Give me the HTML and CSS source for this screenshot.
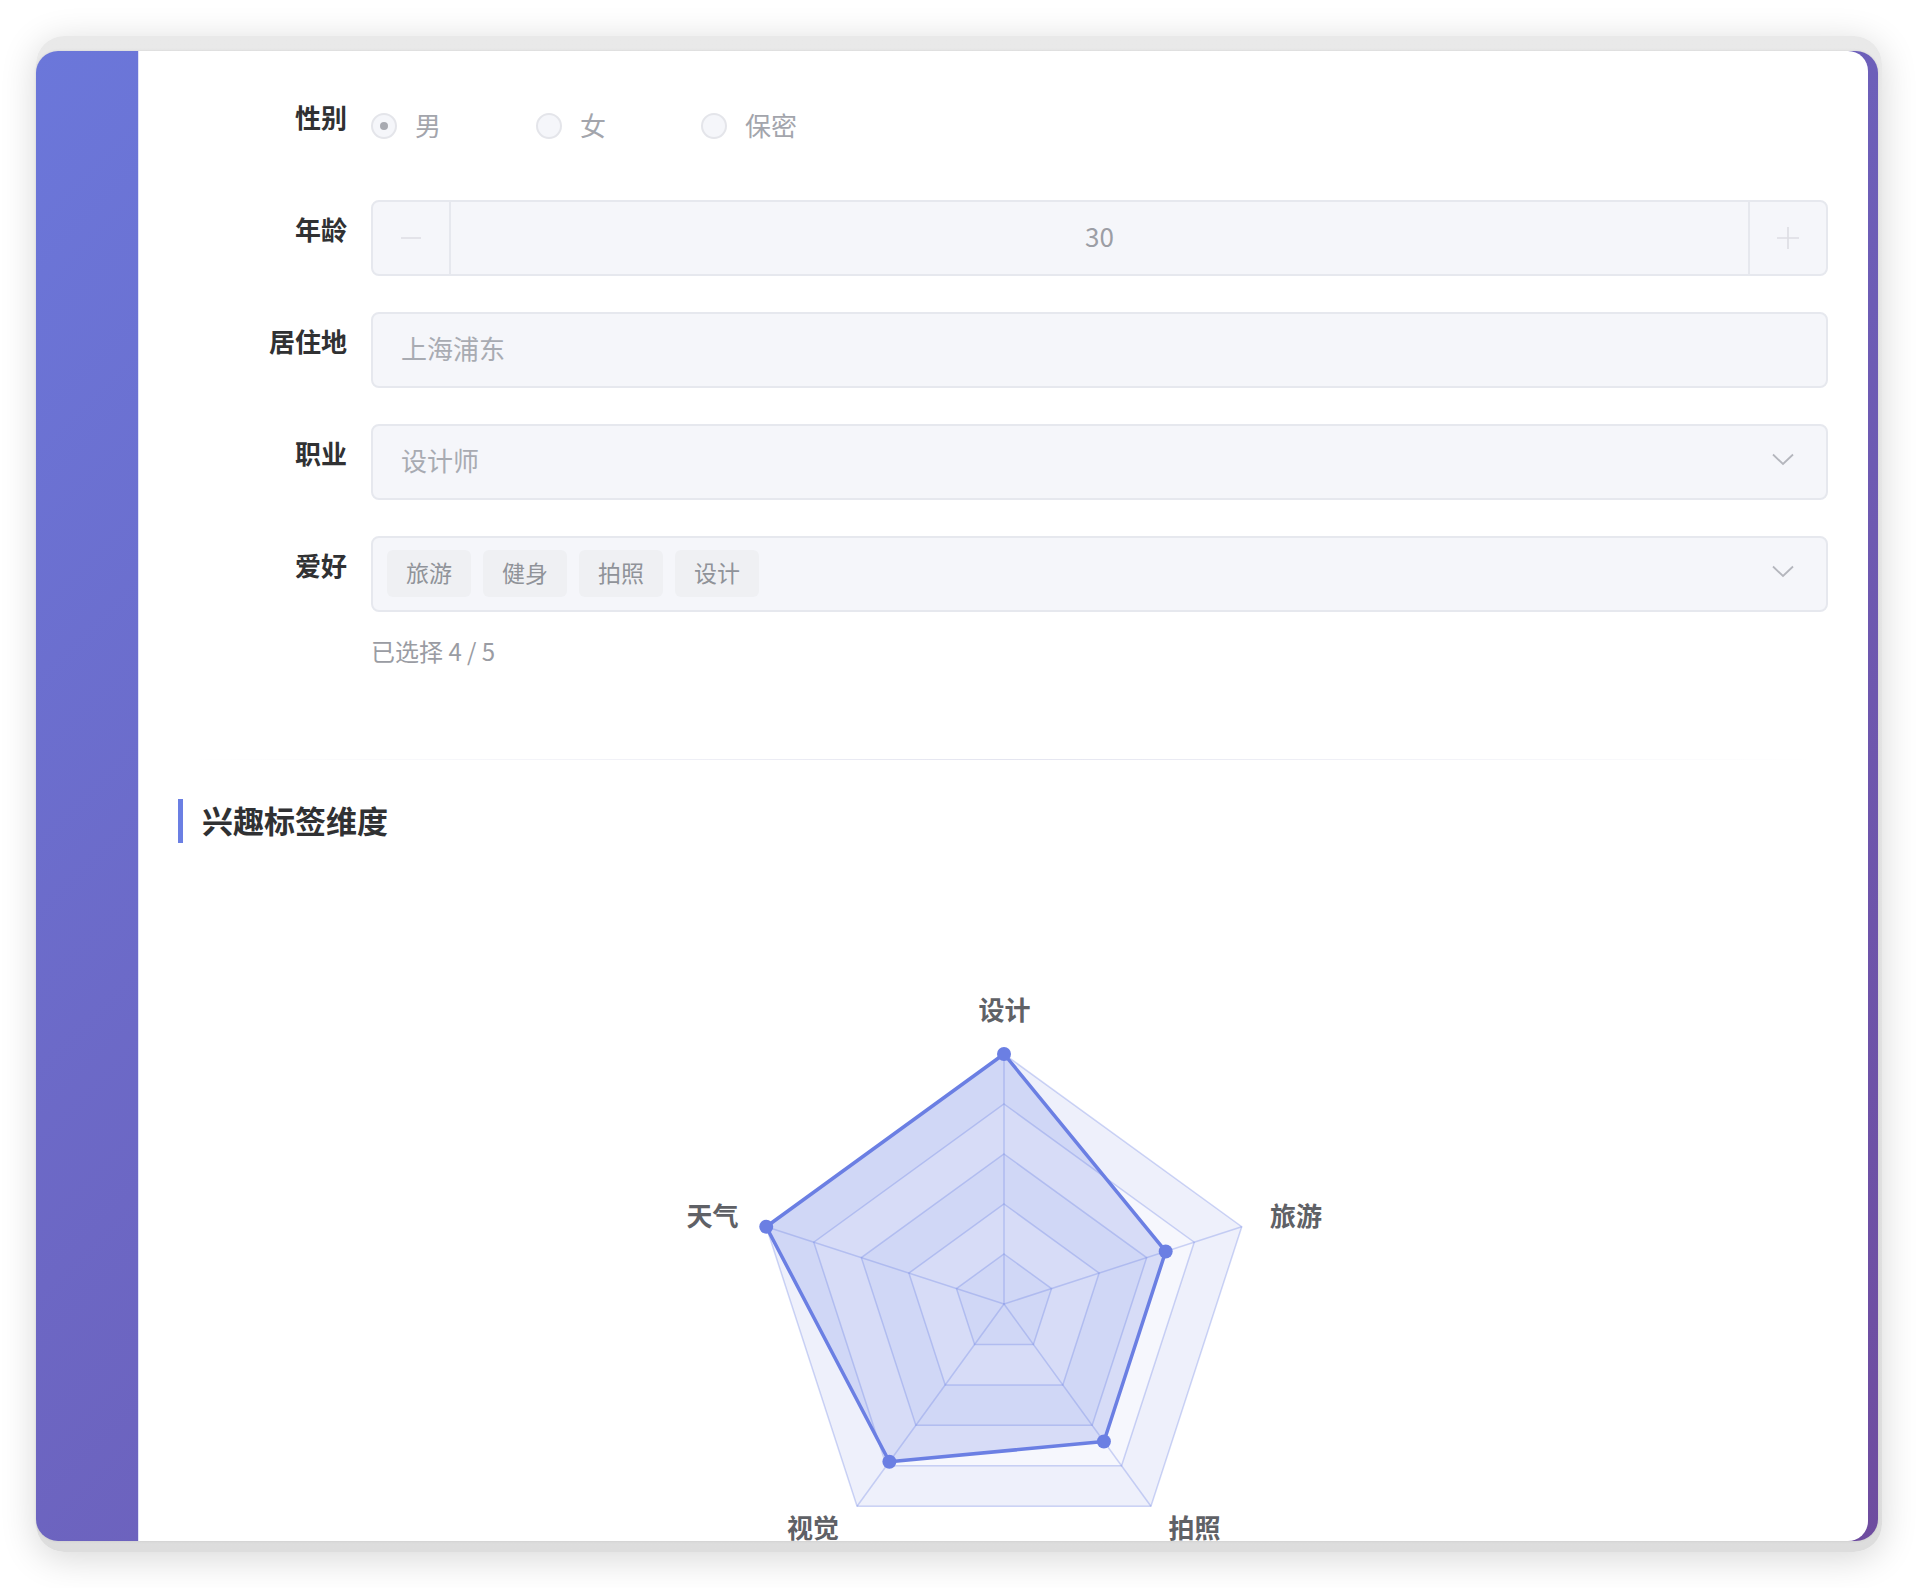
FILE: index.html
```html
<!DOCTYPE html>
<html lang="zh-CN">
<head>
<meta charset="utf-8">
<title>个人资料</title>
<link rel="stylesheet" href="styles.css">
</head>
<body>
<div class="frame">
  <div class="screen">
    <aside class="side"></aside>
    <main class="panel">
      <div class="form">
        <div class="row">
          <label class="lbl">性别</label>
          <div class="radios">
            <span class="radio on"><i class="circle"></i><span>男</span></span>
            <span class="radio"><i class="circle"></i><span>女</span></span>
            <span class="radio"><i class="circle"></i><span>保密</span></span>
          </div>
        </div>
        <div class="row">
          <label class="lbl">年龄</label>
          <div class="field num">
            <span class="step minus"><svg width="22" height="22" viewBox="0 0 22 22"><line x1="1" y1="11" x2="21" y2="11" stroke="#dcdde3" stroke-width="1.6"/></svg></span>
            <span class="val">30</span>
            <span class="step plus"><svg width="22" height="22" viewBox="0 0 22 22"><line x1="0" y1="11" x2="22" y2="11" stroke="#dcdde3" stroke-width="1.6"/><line x1="11" y1="0" x2="11" y2="22" stroke="#dcdde3" stroke-width="1.6"/></svg></span>
          </div>
        </div>
        <div class="row">
          <label class="lbl">居住地</label>
          <div class="field text"><span class="ph">上海浦东</span></div>
        </div>
        <div class="row">
          <label class="lbl">职业</label>
          <div class="field select">
            <span class="ph">设计师</span>
            <svg class="chev" width="22" height="13" viewBox="0 0 22 13"><polyline points="1,1.5 11,11 21,1.5" fill="none" stroke="#b4b6bd" stroke-width="1.8"/></svg>
          </div>
        </div>
        <div class="row last">
          <label class="lbl">爱好</label>
          <div class="field select tags">
            <div class="tag-list">
              <span class="tag">旅游</span>
              <span class="tag">健身</span>
              <span class="tag">拍照</span>
              <span class="tag">设计</span>
            </div>
            <svg class="chev" width="22" height="13" viewBox="0 0 22 13"><polyline points="1,1.5 11,11 21,1.5" fill="none" stroke="#b4b6bd" stroke-width="1.8"/></svg>
          </div>
        </div>
        <div class="hint">已选择 4 / 5</div>
      </div>

      <div class="divider"></div>

      <h2 class="section-title">兴趣标签维度</h2>

      <div class="chart">
        <svg width="800" height="640" viewBox="0 0 800 640">
          <g class="bands">
            <polygon points="400,114 637.76,286.75 546.95,566.25 253.05,566.25 162.24,286.75" fill="#eef0fb"/>
            <polygon points="400,164 590.21,302.2 517.56,525.8 282.44,525.8 209.79,302.2" fill="#f6f7fd"/>
            <polygon points="400,214 542.66,317.65 488.17,485.35 311.83,485.35 257.34,317.65" fill="#eef0fb"/>
            <polygon points="400,264 495.11,333.1 458.78,444.9 341.22,444.9 304.89,333.1" fill="#f6f7fd"/>
            <polygon points="400,314 447.55,348.55 429.39,404.45 370.61,404.45 352.45,348.55" fill="#eef0fb"/>
          </g>
          <g class="grid" fill="none" stroke="rgba(107,127,227,0.32)" stroke-width="1.5">
            <polygon points="400,114 637.76,286.75 546.95,566.25 253.05,566.25 162.24,286.75"/>
            <polygon points="400,164 590.21,302.2 517.56,525.8 282.44,525.8 209.79,302.2"/>
            <polygon points="400,214 542.66,317.65 488.17,485.35 311.83,485.35 257.34,317.65"/>
            <polygon points="400,264 495.11,333.1 458.78,444.9 341.22,444.9 304.89,333.1"/>
            <polygon points="400,314 447.55,348.55 429.39,404.45 370.61,404.45 352.45,348.55"/>
            <line x1="400" y1="364" x2="400" y2="114"/>
            <line x1="400" y1="364" x2="637.76" y2="286.75"/>
            <line x1="400" y1="364" x2="546.95" y2="566.25"/>
            <line x1="400" y1="364" x2="253.05" y2="566.25"/>
            <line x1="400" y1="364" x2="162.24" y2="286.75"/>
          </g>
          <polygon points="400,114 561.68,311.47 499.92,501.53 285.38,521.76 162.24,286.75" fill="rgba(107,127,227,0.22)" stroke="#6b7fe3" stroke-width="3.5" stroke-linejoin="round"/>
          <g fill="#6b7fe3">
            <circle cx="400" cy="114" r="7"/>
            <circle cx="561.68" cy="311.47" r="7"/>
            <circle cx="499.92" cy="501.53" r="7"/>
            <circle cx="285.38" cy="521.76" r="7"/>
            <circle cx="162.24" cy="286.75" r="7"/>
          </g>
          <g class="axis-labels">
            <text x="400.5" y="68.5">设计</text>
            <text x="692" y="274.5">旅游</text>
            <text x="590.5" y="586">拍照</text>
            <text x="209" y="586">视觉</text>
            <text x="108.5" y="274.5">天气</text>
          </g>
        </svg>
      </div>
    </main>
  </div>
</div>
</body>
</html>
```

FILE: styles.css
```css
html, body {
  margin: 0;
  height: 100%;
  background: #ffffff;
}

body {
  padding: 36px;
  box-sizing: border-box;
  font-family: "Noto Sans CJK SC", "Noto Sans", "Liberation Sans", sans-serif;
  color: #303133;
}

.frame {
  height: 1516px;
  box-sizing: border-box;
  border-radius: 28px;
  background: linear-gradient(180deg, #e9e9e9 0%, #dddddd 100%);
  padding: 15px 4px 11px 0;
  box-shadow: 0 6px 36px rgba(0, 0, 0, 0.16);
}

.screen {
  height: 100%;
  display: flex;
  border-radius: 22px;
  overflow: hidden;
  background: linear-gradient(135deg, #6b77da 0%, #6e4c9f 100%);
  box-shadow: 0 0 3px rgba(0, 0, 0, 0.1);
}

.side {
  width: 102px;
  flex: none;
}

.panel {
  flex: 1;
  min-width: 0;
  margin-right: 10px;
  background: #ffffff;
  border-left: 1px solid #dfe1f6;
  border-radius: 0 20px 20px 0;
  overflow: hidden;
  padding-top: 37px;
}

/* ---------- form ---------- */
.form {
  padding: 0 40px 0 88px;
}

.row {
  display: flex;
  align-items: flex-start;
  margin-bottom: 36px;
}

.row.last {
  margin-bottom: 0;
}

.lbl {
  flex: none;
  width: 120px;
  margin-right: 24px;
  padding-top: 9px;
  text-align: right;
  font-size: 26px;
  line-height: 40px;
  font-weight: 600;
  color: #303133;
}

.radios {
  height: 76px;
  display: flex;
  align-items: center;
}

.radio {
  display: flex;
  align-items: center;
  gap: 18px;
  margin-right: 95px;
  font-size: 26px;
  line-height: 30px;
  color: #a3a5ac;
}

.radio span {
  margin-top: -3px;
}

.circle {
  width: 26px;
  height: 26px;
  box-sizing: border-box;
  border: 2px solid #e4e5ea;
  border-radius: 50%;
  background: #f5f6fa;
  display: flex;
  align-items: center;
  justify-content: center;
}

.radio.on .circle::after {
  content: "";
  width: 8px;
  height: 8px;
  border-radius: 50%;
  background: #a8aab1;
}

.field {
  flex: 1;
  height: 76px;
  box-sizing: border-box;
  border: 2px solid #e6e8ee;
  border-radius: 8px;
  background: #f5f6fa;
  display: flex;
  align-items: center;
  font-size: 26px;
  padding-bottom: 5px;
}

.field.text {
  padding-left: 28px;
  padding-right: 28px;
}

.field.select {
  justify-content: space-between;
  padding-left: 28px;
  padding-right: 32px;
}

.field.tags {
  padding-left: 14px;
}

.field.num {
  padding-bottom: 0;
}

.ph {
  color: #a8abb2;
}

.step {
  flex: none;
  width: 76px;
  height: 100%;
  display: flex;
  align-items: center;
  justify-content: center;
}

.minus {
  border-right: 2px solid #e6e8ee;
}

.plus {
  border-left: 2px solid #e6e8ee;
}

.val {
  flex: 1;
  text-align: center;
  color: #9c9ea5;
  margin-top: -5px;
}

.chev {
  display: block;
  flex: none;
}

.tag-list {
  display: flex;
  gap: 12px;
}

.tag {
  height: 47px;
  line-height: 44px;
  padding: 0 19px 3px;
  box-sizing: border-box;
  border-radius: 6px;
  background: #eff0f3;
  color: #909399;
  font-size: 23px;
  margin-top: 4px;
}

.hint {
  margin: 22px 0 0 144px;
  font-size: 24px;
  line-height: 34px;
  color: #9a9ca3;
}

/* ---------- section ---------- */
.divider {
  height: 1px;
  margin: 91px 48px 0;
  background: linear-gradient(90deg, rgba(228, 229, 240, 0) 0%, #e4e5f0 50%, rgba(228, 229, 240, 0) 100%);
}

.section-title {
  margin: 39px 0 0 39px;
  height: 44px;
  border-left: 5px solid #6b7fe3;
  padding-left: 19px;
  font-size: 31px;
  line-height: 42px;
  font-weight: 700;
  color: #303133;
}

.chart {
  margin-top: 97px;
}

.chart svg {
  display: block;
  margin: 0 auto;
}

.axis-labels text {
  font-family: "Noto Sans CJK SC", "Noto Sans", sans-serif;
  font-size: 26px;
  font-weight: 700;
  fill: #5f6166;
  text-anchor: middle;
  dominant-baseline: central;
}
```
